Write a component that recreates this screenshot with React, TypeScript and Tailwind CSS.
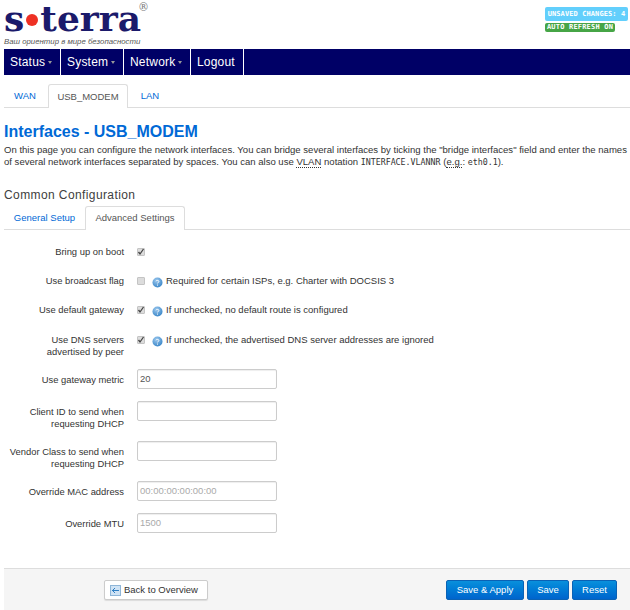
import React from "react";

const font = { fontFamily: '"Liberation Sans", Arial, sans-serif' };
const mono = { fontFamily: '"DejaVu Sans Mono", monospace' };

function Help() {
  return (
    <svg width="11" height="11" viewBox="0 0 11 11" className="shrink-0">
      <defs>
        <radialGradient id="h" cx="0.4" cy="0.3" r="0.8">
          <stop offset="0" stopColor="#9cc8ee" />
          <stop offset="1" stopColor="#2f7fc4" />
        </radialGradient>
      </defs>
      <circle cx="5.5" cy="5.5" r="5" fill="url(#h)" />
      <path d="M4 4.2c.2-1 2.8-1.2 2.9.2 0 1-1.3 1-1.4 2M5.5 7.6v1" stroke="#fff" strokeWidth="1" fill="none" />
    </svg>
  );
}

function Check({ on }: { on?: boolean }) {
  return (
    <span className="w-[8px] h-[8px] bg-[#dcdcdc] border border-[#c4c4c4] rounded-[1px] flex items-center justify-center shrink-0">
      {on && (
        <svg width="8" height="8" viewBox="0 0 8 8" className="shrink-0">
          <path d="M1.5 4l1.5 2 3.5-5" stroke="#444" strokeWidth="1.3" fill="none" />
        </svg>
      )}
    </span>
  );
}

function Row({ h, label, children }: { h: string; label: React.ReactNode; children?: React.ReactNode }) {
  return (
    <div className={`flex ${h}`}>
      <div className="w-[120px] text-right text-[9.4px] leading-[12px] text-[#333] whitespace-nowrap">{label}</div>
      <div className="ml-[13px] flex items-start gap-[7px] text-[9.5px] leading-[12px] text-[#333]">{children}</div>
    </div>
  );
}

function Input({ value, dim }: { value?: string; dim?: boolean }) {
  return (
    <div
      className={`-mt-[5px] w-[140px] h-[20px] border border-[#ccc] rounded-[2px] shadow-[inset_0_1px_1px_rgba(0,0,0,0.07)] px-[2px] text-[9.5px] leading-[18px] ${dim ? "text-[#aaa]" : "text-[#555]"}`}
    >
      {value}
    </div>
  );
}

function Tab({ active, children, w, lead }: { active?: boolean; children: React.ReactNode; w: string; lead: string }) {
  return (
    <div
      className={`${w} ${lead} h-[23px] text-center text-[9.5px] ${active ? "border border-b-0 border-[#ddd] rounded-t-[3px] bg-white text-[#555] -mb-px h-[24px]" : "text-[#0069d6]"}`}
    >
      {children}
    </div>
  );
}

function Btn({ children, w }: { children: React.ReactNode; w: string }) {
  return (
    <div className={`${w} h-[20px] rounded-[2px] border border-[#0a62b5] bg-gradient-to-b from-[#0a90dc] to-[#0064cd] text-white text-[9.5px] leading-[18px] text-center`}>
      {children}
    </div>
  );
}

function Abbr({ children }: { children: React.ReactNode }) {
  return <span className="border-b border-dotted border-[#333]">{children}</span>;
}

export default function App() {
  return (
    <div style={font} className="w-[630px] h-[610px] overflow-hidden bg-white pl-[4px] text-[#333]">
      <div className="h-[49px] flex justify-between">
        <div>
          <div className="h-[36px] flex items-center text-[#1b1a6b] font-bold text-[36px] leading-[36px]" style={{ fontFamily: '"DejaVu Serif", serif' }}>
            <span>s</span>
            <span className="w-[12px] h-[12px] rounded-full bg-[#ee3124] mx-[2px] mt-[4px]" />
            <span>terra</span>
            <span className="text-[11px] font-normal self-start text-[#777] leading-[11px] mt-[2px] -ml-[3px]">®</span>
          </div>
          <div className="mt-[1px] text-[7.8px] italic leading-[10px] text-[#555] whitespace-nowrap">Ваш ориентир в мире безопасности</div>
        </div>
        <div className="pt-[7px] w-[85px] flex flex-col items-start gap-[2px]">
          <div className="h-[14px] w-[83px] bg-[#62cffc] rounded-[2px] text-white text-[7px] font-bold leading-[14px] text-center tracking-[0.1px] whitespace-nowrap" style={mono}>UNSAVED CHANGES: 4</div>
          <div className="h-[9px] w-[70px] bg-[#46a546] rounded-[2px] text-white text-[7px] font-bold leading-[9px] text-center tracking-[0.2px] whitespace-nowrap" style={mono}>AUTO REFRESH ON</div>
        </div>
      </div>

      <div className="h-[26px] bg-[#000066] flex text-white text-[12px] leading-[26px]">
        {[
          ["Status", "w-[57px]", true],
          ["System", "w-[63px]", true],
          ["Network", "w-[67px]", true],
          ["Logout", "w-[53px]", false],
        ].map(([t, w, caret]) => (
          <div key={t as string} className={`${w as string} pl-[6px] border-r border-white flex items-center gap-[3px]`}>
            <span className="tracking-[0.2px]">{t as string}</span>
            {caret && <span className="w-0 h-0 border-l-[2.5px] border-r-[2.5px] border-t-[3px] border-l-transparent border-r-transparent border-t-[#999] mt-[1px]" />}
          </div>
        ))}
      </div>

      <div className="mt-[9px] h-[23px] flex border-b border-[#ddd] box-content">
        <Tab w="w-[42px]" lead="leading-[24px]">WAN</Tab>
        <div className="w-[2px]" />
        <Tab active w="w-[80px]" lead="leading-[23px]">USB_MODEM</Tab>
        <Tab w="w-[44px]" lead="leading-[24px]">LAN</Tab>
      </div>

      <h2 className="mt-[15px] text-[16px] leading-[18px] font-bold text-[#0069d6]">Interfaces - USB_MODEM</h2>
      <div className="mt-[3px] text-[9.55px] leading-[12px] text-[#333] whitespace-nowrap">
        <div>On this page you can configure the network interfaces. You can bridge several interfaces by ticking the "bridge interfaces" field and enter the names</div>
        <div>
          of several network interfaces separated by spaces. You can also use <Abbr>VLAN</Abbr> notation <span style={mono} className="text-[8.3px]">INTERFACE.VLANNR</span> (<Abbr>e.g.</Abbr>: <span style={mono} className="text-[8.3px]">eth0.1</span>).
        </div>
      </div>

      <h3 className="mt-[20px] text-[12px] leading-[14px] tracking-[0.4px] text-[#404040]">Common Configuration</h3>
      <div className="mt-[4px] h-[23px] flex border-b border-[#ddd] box-content">
        <Tab w="w-[81px]" lead="leading-[23px]">General Setup</Tab>
        <Tab active w="w-[100px]" lead="leading-[22px]">Advanced Settings</Tab>
      </div>

      <div className="pt-[16px]">
        <Row h="h-[29px]" label="Bring up on boot">
          <span className="mt-[2px]"><Check on /></span>
        </Row>
        <Row h="h-[29px]" label="Use broadcast flag">
          <span className="mt-[2px]"><Check /></span>
          <span className="flex items-start gap-[3px]"><span className="mt-[2px]"><Help /></span>Required for certain ISPs, e.g. Charter with DOCSIS 3</span>
        </Row>
        <Row h="h-[30px]" label="Use default gateway">
          <span className="mt-[2px]"><Check on /></span>
          <span className="flex items-start gap-[3px]"><span className="mt-[2px]"><Help /></span>If unchecked, no default route is configured</span>
        </Row>
        <Row h="h-[40px]" label={<>Use DNS servers<br />advertised by peer</>}>
          <span className="mt-[2px]"><Check on /></span>
          <span className="flex items-start gap-[3px]"><span className="mt-[2px]"><Help /></span>If unchecked, the advertised DNS server addresses are ignored</span>
        </Row>
        <Row h="h-[32px]" label="Use gateway metric"><Input value="20" /></Row>
        <Row h="h-[40px]" label={<>Client ID to send when<br />requesting DHCP</>}><Input /></Row>
        <Row h="h-[40px]" label={<>Vendor Class to send when<br />requesting DHCP</>}><Input /></Row>
        <Row h="h-[32px]" label="Override MAC address"><Input value="00:00:00:00:00:00" dim /></Row>
        <Row h="h-[32px]" label="Override MTU"><Input value="1500" dim /></Row>
      </div>

      <div className="mt-[18px] h-[42px] bg-[#f5f5f5] border-t border-[#ddd] flex items-start pt-[11px]">
        <div className="ml-[100px] w-[104px] h-[20px] bg-white border border-[#ccc] rounded-[2px] shadow-[0_1px_1px_rgba(0,0,0,0.1)] flex items-center gap-[3px] pl-[5px] text-[9.5px] whitespace-nowrap text-[#333]">
          <svg width="11" height="11" viewBox="0 0 11 11" className="shrink-0">
            <rect x="0.5" y="0.5" width="10" height="10" fill="#cfe3f5" stroke="#8fb6d8" />
            <path d="M2 5.5h7M5 3L2.5 5.5 5 8" stroke="#2f7fc4" fill="none" />
          </svg>
          Back to Overview
        </div>
        <div className="ml-auto mr-[13px] flex gap-[3px]">
          <Btn w="w-[78px]">Save &amp; Apply</Btn>
          <Btn w="w-[42px]">Save</Btn>
          <Btn w="w-[45px]">Reset</Btn>
        </div>
      </div>
    </div>
  );
}
